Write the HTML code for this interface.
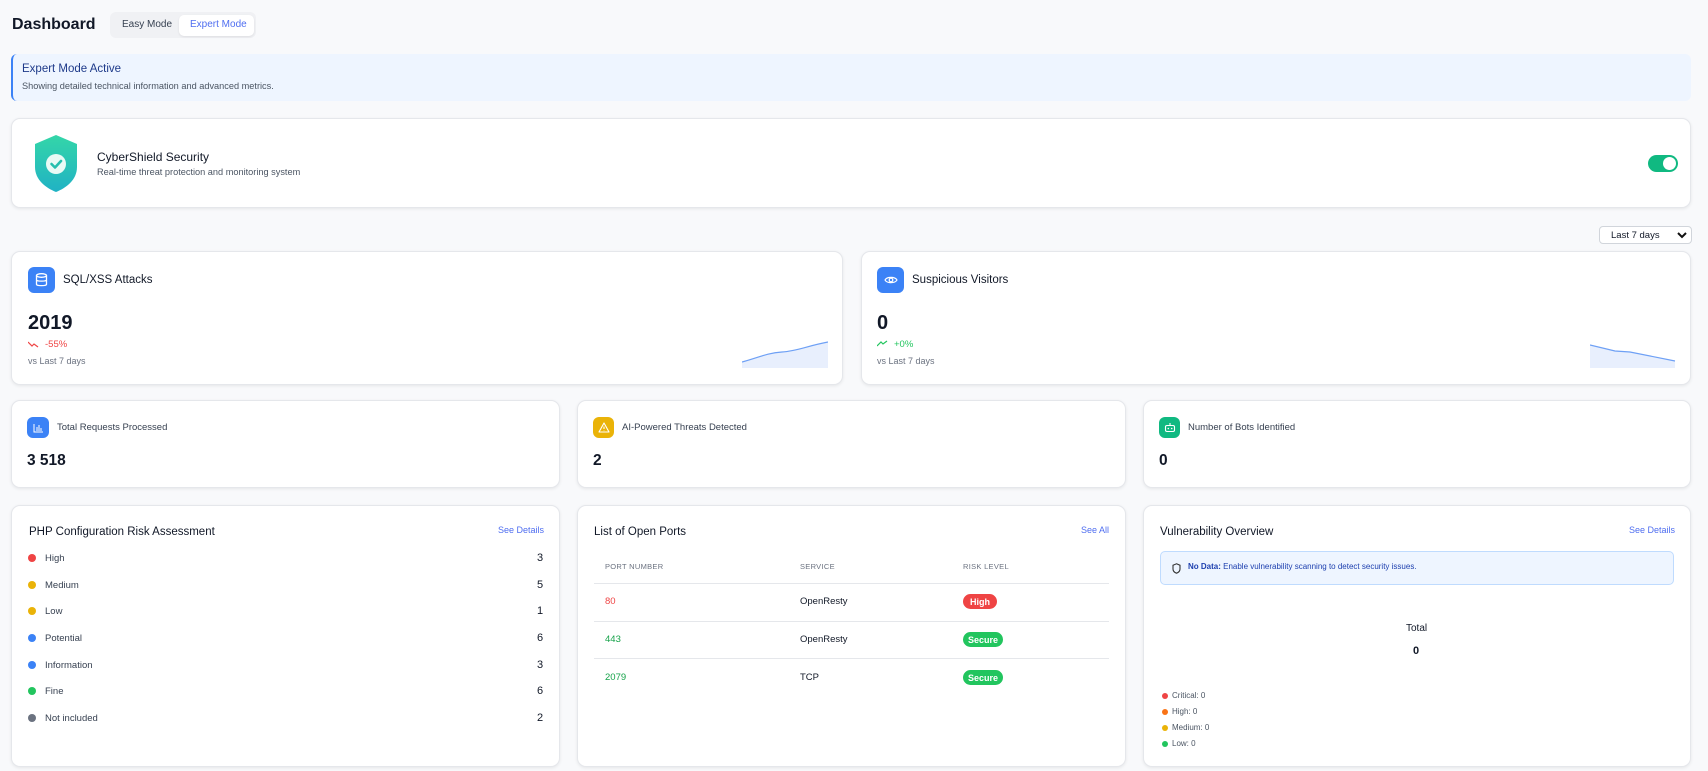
<!DOCTYPE html>
<html><head><meta charset="utf-8"><style>
*{box-sizing:border-box;margin:0;padding:0}
body{width:1708px;height:771px;background:#f8f9fb;font-family:"Liberation Sans",sans-serif;color:#111827;position:relative;overflow:hidden}
.a{position:absolute}
.card{position:absolute;background:#fff;border:1px solid #e5e7eb;border-radius:9px;box-shadow:0 1px 3px rgba(0,0,0,.08)}
.ic{position:absolute;border-radius:6px;display:flex;align-items:center;justify-content:center}
.t{position:absolute;white-space:nowrap;line-height:1}
.dot{position:absolute;width:8px;height:8px;border-radius:50%}
.badge{position:absolute;height:15px;border-radius:8px;color:#fff;font-size:9px;font-weight:bold;display:flex;align-items:center;justify-content:center}
.hl{position:absolute;height:1px;background:#e5e7eb}
</style></head><body>
<div class="t" style="left:12px;top:17px;font-size:16px;font-weight:bold">Dashboard</div>
<div class="a" style="left:110px;top:12px;width:146px;height:26px;background:#f0f1f4;border-radius:6px"></div>
<div class="t" style="left:122px;top:20px;font-size:10px;color:#374151">Easy Mode</div>
<div class="a" style="left:179px;top:15px;width:75px;height:21px;background:#fff;border-radius:5px;box-shadow:0 1px 2px rgba(0,0,0,.08)"></div>
<div class="t" style="left:190px;top:20px;font-size:10px;color:#4f6ef0">Expert Mode</div>

<div class="a" style="left:11px;top:54px;width:1680px;height:47px;background:#eef5ff;border-left:2px solid #3b82f6;border-radius:6px"></div>
<div class="t" style="left:22px;top:64px;font-size:11.5px;color:#1e3a8a">Expert Mode Active</div>
<div class="t" style="left:22px;top:82px;font-size:9.2px;color:#4b5563">Showing detailed technical information and advanced metrics.</div>

<div class="card" style="left:11px;top:118px;width:1680px;height:90px"></div>
<svg class="a" style="left:33px;top:134px" width="46" height="59" viewBox="0 0 46 59"><defs><linearGradient id="g" x1="0" y1="0" x2="0" y2="1"><stop offset="0" stop-color="#34d6a8"/><stop offset="1" stop-color="#20b2c4"/></linearGradient></defs><path d="M23 1 L44 10 V33 C44 46 33 54 23 58 C13 54 2 46 2 33 V10 Z" fill="url(#g)"/><circle cx="23" cy="30" r="10" fill="#e9faf5"/><path d="M18.5 30 L22 33.5 L28 27" stroke="#25bfae" stroke-width="2.6" fill="none" stroke-linecap="round" stroke-linejoin="round"/></svg>
<div class="t" style="left:97px;top:151px;font-size:12px;color:#111827">CyberShield Security</div>
<div class="t" style="left:97px;top:168px;font-size:9.2px;color:#4b5563">Real-time threat protection and monitoring system</div>
<div class="a" style="left:1648px;top:155px;width:30px;height:17px;background:#10b981;border-radius:9px"></div>
<div class="a" style="left:1663px;top:157px;width:13px;height:13px;background:#fff;border-radius:50%"></div>

<div class="a" style="left:1599px;top:226px;width:93px;height:18px;background:#fff;border:1px solid #d1d5db;border-radius:4px"></div>
<div class="t" style="left:1611px;top:231px;font-size:9.5px">Last 7 days</div>
<svg class="a" style="left:1677px;top:231px" width="10" height="8" viewBox="0 0 10 8"><path d="M1 2 L5 6 L9 2" stroke="#111" stroke-width="2" fill="none"/></svg>

<div class="card" style="left:11px;top:251px;width:832px;height:134px"></div>
<div class="ic" style="left:28px;top:267px;width:27px;height:26px;background:#3b82f6"><svg width="13" height="14" viewBox="0 0 13 14"><ellipse cx="6.5" cy="2.5" rx="5" ry="1.8" fill="none" stroke="#fff" stroke-width="1.3"/><path d="M1.5 2.5 V11.5 C1.5 13 11.5 13 11.5 11.5 V2.5 M1.5 7 C1.5 8.5 11.5 8.5 11.5 7" fill="none" stroke="#fff" stroke-width="1.3"/></svg></div>
<div class="t" style="left:63px;top:275px;font-size:11.5px">SQL/XSS Attacks</div>
<div class="t" style="left:28px;top:313px;font-size:20px;font-weight:bold">2019</div>
<svg class="a" style="left:28px;top:341px" width="11" height="7" viewBox="0 0 11 7"><path d="M0 1 L4 5 L6 3 L10 6" stroke="#ef4444" stroke-width="1.2" fill="none"/></svg>
<div class="t" style="left:45px;top:340px;font-size:9.5px;color:#ef4444">-55%</div>
<div class="t" style="left:28px;top:357px;font-size:9px;color:#6b7280">vs Last 7 days</div>
<svg class="a" style="left:742px;top:339px" width="86" height="30" viewBox="0 0 86 30"><path d="M0 23 C15 19 25 14 40 13 C55 12 65 7 86 3 V29 H0 Z" fill="#e8effd"/><path d="M0 23 C15 19 25 14 40 13 C55 12 65 7 86 3" fill="none" stroke="#6ea0f5" stroke-width="1.2"/></svg>

<div class="card" style="left:861px;top:251px;width:830px;height:134px"></div>
<div class="ic" style="left:877px;top:267px;width:27px;height:26px;background:#3b82f6"><svg width="14" height="10" viewBox="0 0 14 10"><path d="M1 5 C3 1.5 11 1.5 13 5 C11 8.5 3 8.5 1 5 Z" fill="none" stroke="#fff" stroke-width="1.2"/><circle cx="7" cy="5" r="1.8" fill="none" stroke="#fff" stroke-width="1.2"/></svg></div>
<div class="t" style="left:912px;top:275px;font-size:11.5px">Suspicious Visitors</div>
<div class="t" style="left:877px;top:313px;font-size:20px;font-weight:bold">0</div>
<svg class="a" style="left:877px;top:340px" width="11" height="7" viewBox="0 0 11 7"><path d="M0 6 L4 2 L6 4 L10 1" stroke="#22c55e" stroke-width="1.2" fill="none"/></svg>
<div class="t" style="left:894px;top:340px;font-size:9.5px;color:#22c55e">+0%</div>
<div class="t" style="left:877px;top:357px;font-size:9px;color:#6b7280">vs Last 7 days</div>
<svg class="a" style="left:1590px;top:344px" width="86" height="25" viewBox="0 0 86 25"><path d="M0 1 L25 7 L40 8 L85 17 V24 H0 Z" fill="#e8effd"/><path d="M0 1 L25 7 L40 8 L85 17" fill="none" stroke="#6ea0f5" stroke-width="1.2"/></svg>

<div class="card" style="left:11px;top:400px;width:549px;height:88px"></div>
<div class="ic" style="left:27px;top:417px;width:22px;height:21px;background:#3b82f6"><svg width="11" height="10" viewBox="0 0 11 10"><path d="M1 1 V9 H10 M4 8 V4 M6 8 V2 M8 8 V5" stroke="#fff" stroke-width="1" fill="none"/></svg></div>
<div class="t" style="left:57px;top:423px;font-size:9.5px;color:#374151">Total Requests Processed</div>
<div class="t" style="left:27px;top:453px;font-size:15.5px;font-weight:bold">3 518</div>

<div class="card" style="left:577px;top:400px;width:549px;height:88px"></div>
<div class="ic" style="left:593px;top:417px;width:21px;height:21px;background:#eab308"><svg width="12" height="11" viewBox="0 0 12 11"><path d="M6 1 L11 10 H1 Z" fill="none" stroke="#fff" stroke-width="1.1" stroke-linejoin="round"/><path d="M6 4.5 V7 M6 8.3 V8.6" stroke="#fff" stroke-width="1.1"/></svg></div>
<div class="t" style="left:622px;top:423px;font-size:9.5px;color:#374151">AI-Powered Threats Detected</div>
<div class="t" style="left:593px;top:453px;font-size:15.5px;font-weight:bold">2</div>

<div class="card" style="left:1143px;top:400px;width:548px;height:88px"></div>
<div class="ic" style="left:1159px;top:417px;width:21px;height:21px;background:#10b981"><svg width="12" height="11" viewBox="0 0 12 11"><rect x="1.5" y="3.5" width="9" height="6" rx="1.5" fill="none" stroke="#fff" stroke-width="1.1"/><path d="M6 1 V3.5" stroke="#fff" stroke-width="1.1"/><circle cx="4.3" cy="6.5" r=".8" fill="#fff"/><circle cx="7.7" cy="6.5" r=".8" fill="#fff"/></svg></div>
<div class="t" style="left:1188px;top:423px;font-size:9.5px;color:#374151">Number of Bots Identified</div>
<div class="t" style="left:1159px;top:453px;font-size:15.5px;font-weight:bold">0</div>

<div class="card" style="left:11px;top:505px;width:549px;height:262px"></div>
<div class="t" style="left:29px;top:527px;font-size:11.5px">PHP Configuration Risk Assessment</div>
<div class="t" style="left:498px;top:526px;font-size:9px;color:#4f6ef0">See Details</div>
<div class="dot" style="left:28px;top:554px;background:#ef4444"></div><div class="t" style="left:45px;top:554px;font-size:9.5px;color:#374151">High</div><div class="t" style="left:537px;top:553px;font-size:11px">3</div>
<div class="dot" style="left:28px;top:581px;background:#eab308"></div><div class="t" style="left:45px;top:581px;font-size:9.5px;color:#374151">Medium</div><div class="t" style="left:537px;top:580px;font-size:11px">5</div>
<div class="dot" style="left:28px;top:607px;background:#eab308"></div><div class="t" style="left:45px;top:607px;font-size:9.5px;color:#374151">Low</div><div class="t" style="left:537px;top:606px;font-size:11px">1</div>
<div class="dot" style="left:28px;top:634px;background:#3b82f6"></div><div class="t" style="left:45px;top:634px;font-size:9.5px;color:#374151">Potential</div><div class="t" style="left:537px;top:633px;font-size:11px">6</div>
<div class="dot" style="left:28px;top:661px;background:#3b82f6"></div><div class="t" style="left:45px;top:661px;font-size:9.5px;color:#374151">Information</div><div class="t" style="left:537px;top:660px;font-size:11px">3</div>
<div class="dot" style="left:28px;top:687px;background:#22c55e"></div><div class="t" style="left:45px;top:687px;font-size:9.5px;color:#374151">Fine</div><div class="t" style="left:537px;top:686px;font-size:11px">6</div>
<div class="dot" style="left:28px;top:714px;background:#6b7280"></div><div class="t" style="left:45px;top:714px;font-size:9.5px;color:#374151">Not included</div><div class="t" style="left:537px;top:713px;font-size:11px">2</div>

<div class="card" style="left:577px;top:505px;width:549px;height:262px"></div>
<div class="t" style="left:594px;top:527px;font-size:11.5px">List of Open Ports</div>
<div class="t" style="left:1081px;top:526px;font-size:9px;color:#4f6ef0">See All</div>
<div class="t" style="left:605px;top:563px;font-size:7.5px;color:#6b7280;letter-spacing:.3px">PORT NUMBER</div>
<div class="t" style="left:800px;top:563px;font-size:7.5px;color:#6b7280;letter-spacing:.3px">SERVICE</div>
<div class="t" style="left:963px;top:563px;font-size:7.5px;color:#6b7280;letter-spacing:.3px">RISK LEVEL</div>
<div class="hl" style="left:594px;top:583px;width:515px"></div>
<div class="t" style="left:605px;top:597px;font-size:9.5px;color:#ef4444">80</div>
<div class="t" style="left:800px;top:597px;font-size:9.5px">OpenResty</div>
<div class="badge" style="left:963px;top:594px;width:34px;background:#ef4444">High</div>
<div class="hl" style="left:594px;top:621px;width:515px"></div>
<div class="t" style="left:605px;top:635px;font-size:9.5px;color:#16a34a">443</div>
<div class="t" style="left:800px;top:635px;font-size:9.5px">OpenResty</div>
<div class="badge" style="left:963px;top:632px;width:40px;background:#22c55e">Secure</div>
<div class="hl" style="left:594px;top:658px;width:515px"></div>
<div class="t" style="left:605px;top:673px;font-size:9.5px;color:#16a34a">2079</div>
<div class="t" style="left:800px;top:673px;font-size:9.5px">TCP</div>
<div class="badge" style="left:963px;top:670px;width:40px;background:#22c55e">Secure</div>

<div class="card" style="left:1143px;top:505px;width:548px;height:262px"></div>
<div class="t" style="left:1160px;top:527px;font-size:11.5px">Vulnerability Overview</div>
<div class="t" style="left:1629px;top:526px;font-size:9px;color:#4f6ef0">See Details</div>
<div class="a" style="left:1160px;top:551px;width:514px;height:34px;background:#eef5ff;border:1px solid #bfdbfe;border-radius:5px"></div>
<svg class="a" style="left:1172px;top:563px" width="9" height="11" viewBox="0 0 9 11"><path d="M4.5 .8 L8 2.2 V6 C8 8 6.5 9.5 4.5 10.2 C2.5 9.5 1 8 1 6 V2.2 Z" fill="none" stroke="#333" stroke-width="1.1"/></svg>
<div class="t" style="left:1188px;top:563px;font-size:8px;color:#1e40af"><b>No Data:</b> Enable vulnerability scanning to detect security issues.</div>
<div class="t" style="left:1406px;top:624px;font-size:10px">Total</div>
<div class="t" style="left:1413px;top:646px;font-size:11px;font-weight:bold">0</div>
<div class="dot" style="left:1162px;top:693px;width:6px;height:6px;background:#ef4444"></div><div class="t" style="left:1172px;top:692px;font-size:8px;color:#4b5563">Critical: 0</div>
<div class="dot" style="left:1162px;top:709px;width:6px;height:6px;background:#f97316"></div><div class="t" style="left:1172px;top:708px;font-size:8px;color:#4b5563">High: 0</div>
<div class="dot" style="left:1162px;top:725px;width:6px;height:6px;background:#eab308"></div><div class="t" style="left:1172px;top:724px;font-size:8px;color:#4b5563">Medium: 0</div>
<div class="dot" style="left:1162px;top:741px;width:6px;height:6px;background:#22c55e"></div><div class="t" style="left:1172px;top:740px;font-size:8px;color:#4b5563">Low: 0</div>
</body></html>
